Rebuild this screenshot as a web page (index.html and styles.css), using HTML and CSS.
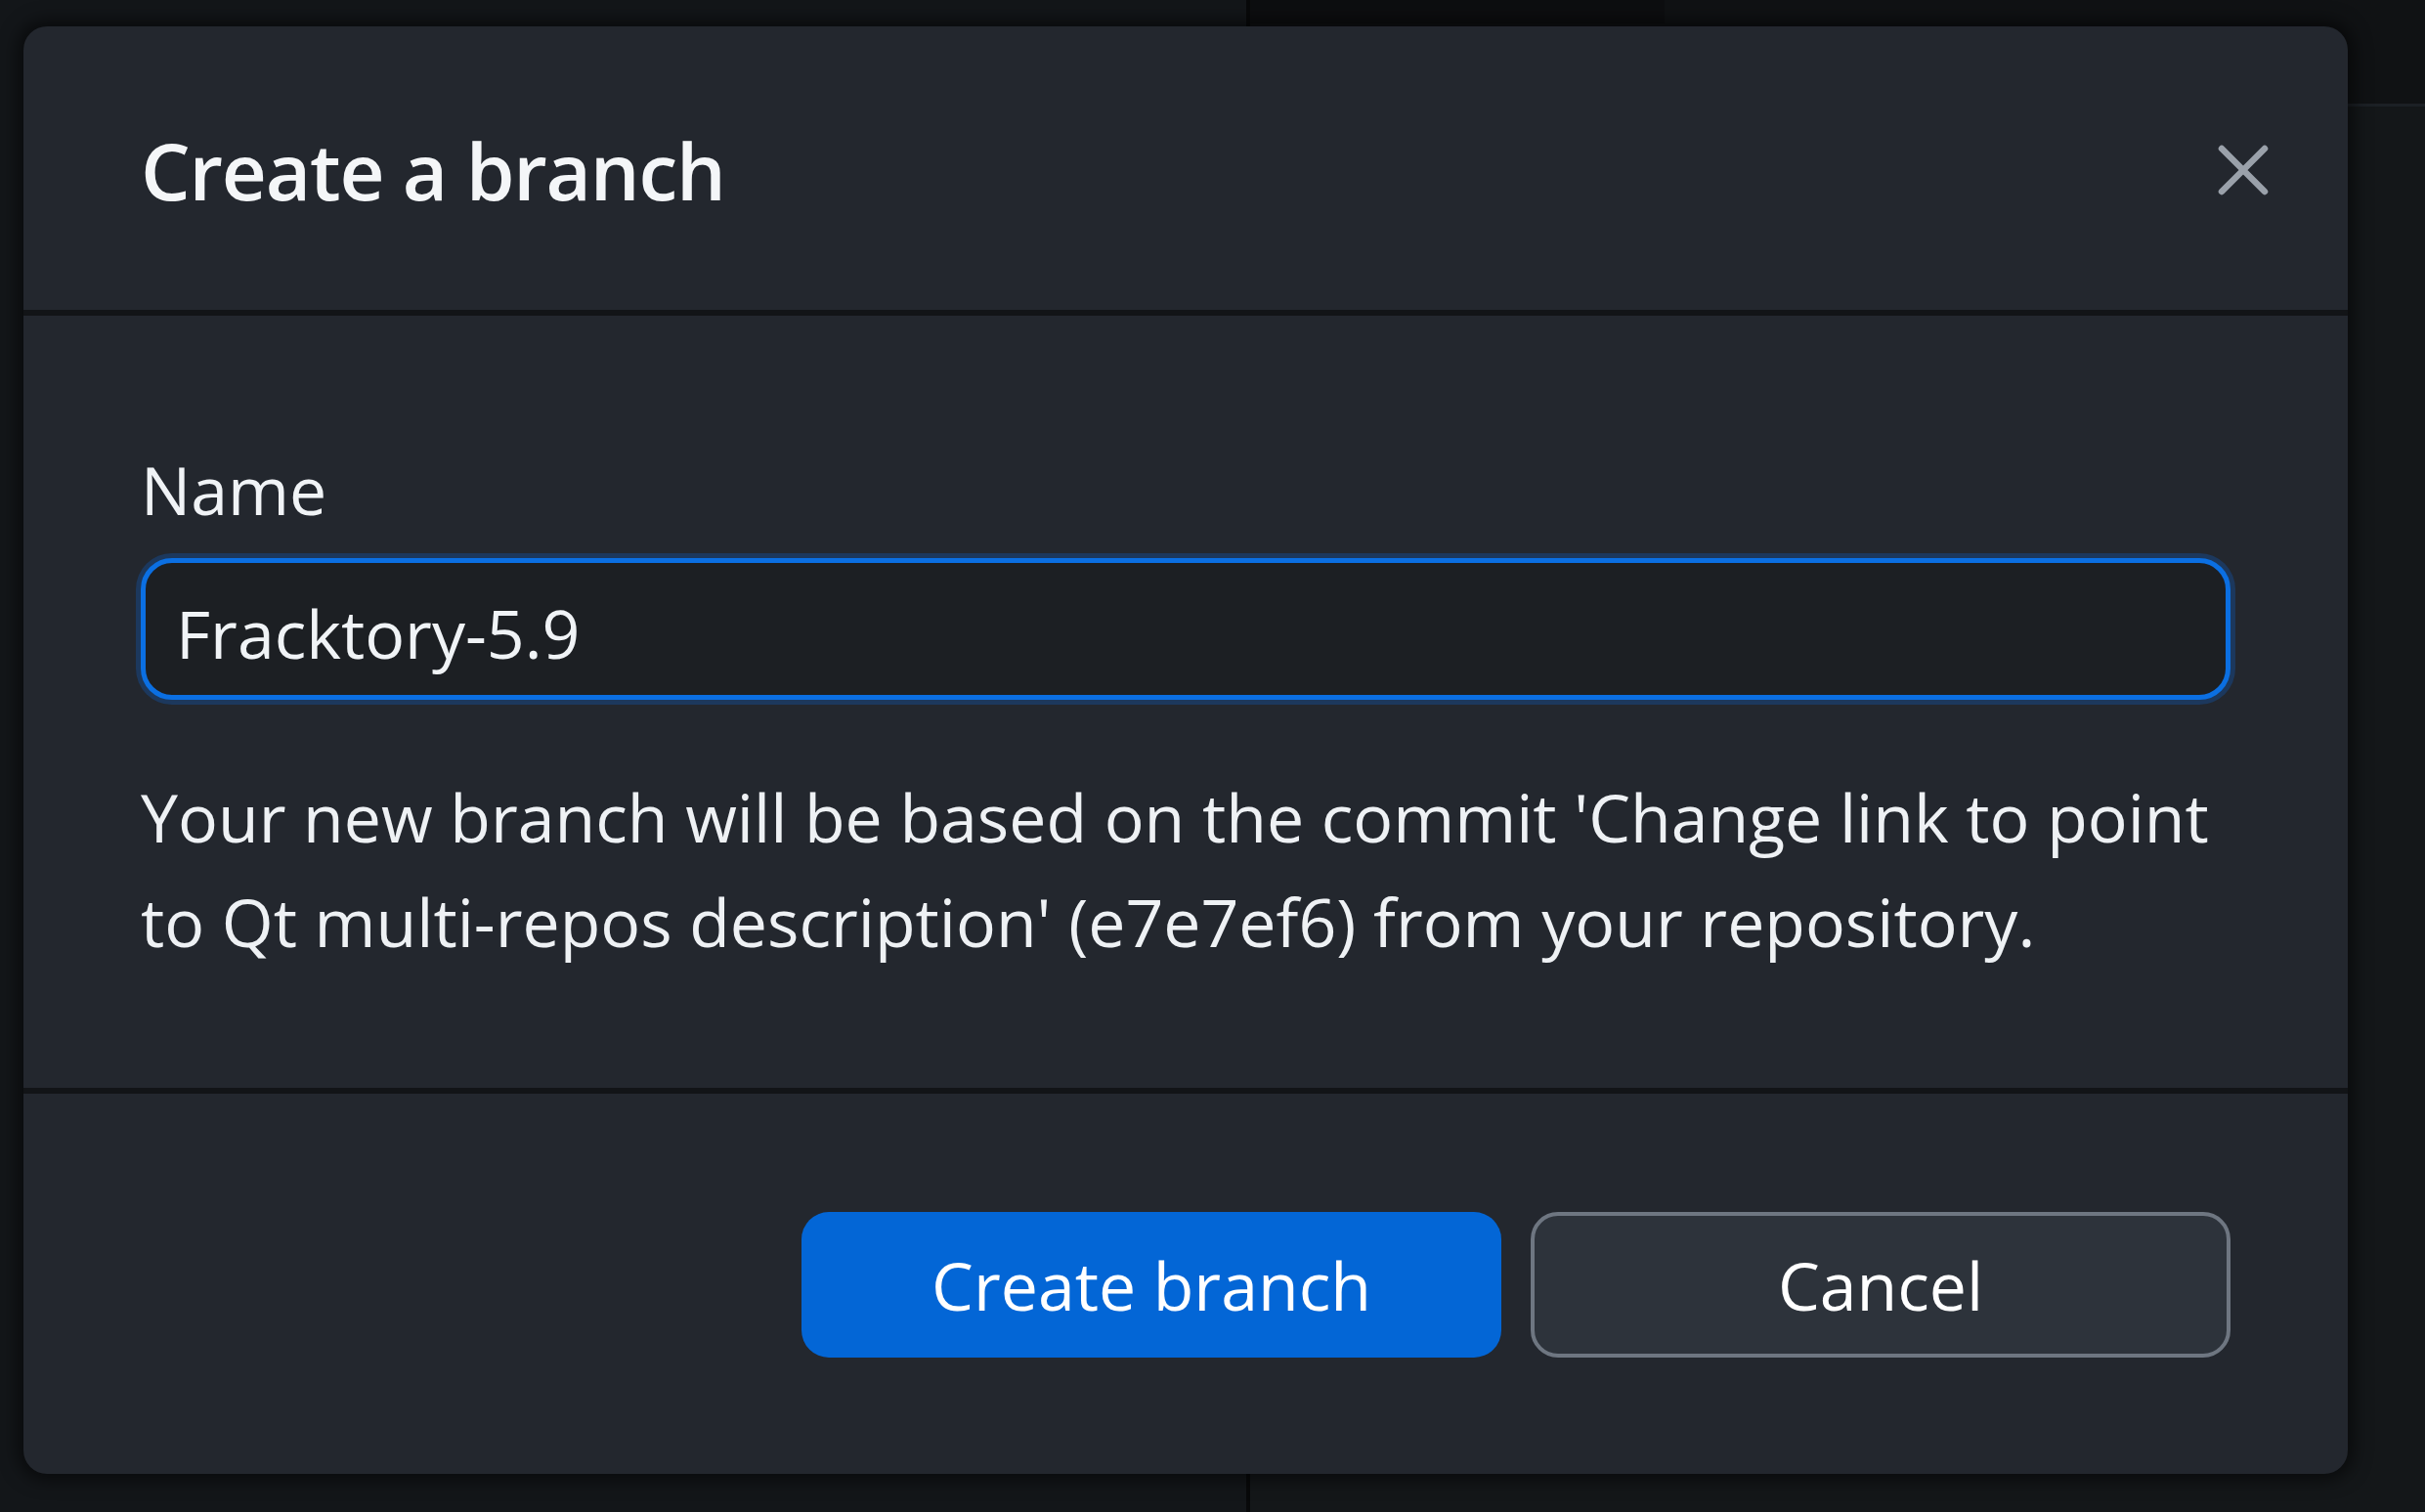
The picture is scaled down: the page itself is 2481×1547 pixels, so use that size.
FILE: index.html
```html
<!DOCTYPE html>
<html lang="en">
<head>
<meta charset="utf-8">
<title>Create a branch</title>
<link rel="stylesheet" href="styles.css">
</head>
<body>
<div class="app">
  <div class="pane-left"></div>
  <div class="pane-sep"></div>
  <div class="pane-right">
    <div class="toolbar">
      <div class="toolbar-dark"></div>
    </div>
    <div class="pane-content"></div>
  </div>
</div>

<div class="dialog" role="dialog" aria-labelledby="dlg-title">
  <header class="dialog-header">
    <h1 id="dlg-title" class="dialog-title">Create a branch</h1>
    <button class="close-btn" aria-label="Close">
      <svg viewBox="0 0 54 54" width="54" height="54" aria-hidden="true">
        <path d="M5 5 L49 49 M49 5 L5 49" stroke="#9aa1aa" stroke-width="6.5" stroke-linecap="round" fill="none"/>
      </svg>
    </button>
  </header>
  <div class="dialog-body">
    <label class="field-label" for="branch-name">Name</label>
    <input id="branch-name" class="text-input" type="text" value="Fracktory-5.9">
    <p class="description">Your new branch will be based on the commit 'Change link to point to Qt multi-repos description' (e7e7ef6) from your repository.</p>
  </div>
  <footer class="dialog-footer">
    <button class="btn btn-primary">Create branch</button>
    <button class="btn btn-secondary">Cancel</button>
  </footer>
</div>
</body>
</html>
```
FILE: styles.css
```css
html, body {
  margin: 0;
  padding: 0;
  width: 2481px;
  height: 1547px;
  overflow: hidden;
  background: #121416;
  font-family: "Open Sans", "Noto Sans", sans-serif;
  color: #f0f3f6;
}

/* underlying app (mostly covered by the modal) */
.app {
  display: flex;
  width: 100%;
  height: 100%;
}
.pane-left {
  width: 1275px;
  background: #131619;
}
.pane-sep {
  width: 4px;
  background: #08090a;
}
.pane-right {
  flex: 1;
  display: flex;
  flex-direction: column;
}
.toolbar {
  height: 106px;
  background: #101214;
  border-bottom: 3px solid #1c2025;
  display: flex;
}
.toolbar-dark {
  width: 424px;
  height: 24px;
  background: #0d0e10;
}
.pane-content {
  flex: 1;
  background: #141719;
}

/* modal dialog lies over the app */
.dialog {
  position: absolute;
  left: 24px;
  top: 27px;
  width: 2378px;
  height: 1481px;
  background: #23272e;
  border-radius: 24px;
  box-shadow: 0 0 18px 6px rgba(0, 0, 0, 0.55);
  display: flex;
  flex-direction: column;
  overflow: hidden;
}

.dialog-header {
  height: 296px;
  flex: none;
  box-sizing: border-box;
  padding: 4px 80px 0 120px;
  display: flex;
  align-items: center;
  justify-content: space-between;
  border-bottom: 6px solid #121417;
}
.dialog-title {
  margin: 0;
  font-size: 80px;
  font-weight: 600;
  letter-spacing: -1.2px;
  line-height: 1.2;
  color: #f4f6f8;
}
.close-btn {
  width: 54px;
  height: 54px;
  padding: 0;
  margin: 0;
  border: 0;
  background: transparent;
  display: flex;
  align-items: center;
  justify-content: center;
}
.close-btn svg { display: block; }

.dialog-body {
  flex: none;
  height: 790px;
  box-sizing: border-box;
  padding: 132px 120px 0 120px;
  display: flex;
  flex-direction: column;
}
.field-label {
  font-size: 68px;
  line-height: 92px;
  color: #f0f3f6;
}
.text-input {
  margin: 24px 0 0 0;
  height: 145px;
  box-sizing: border-box;
  width: 100%;
  border: 5px solid #0b6fe2;
  border-radius: 32px;
  background: #1c1f23;
  box-shadow: 0 0 0 5px rgba(17, 88, 180, 0.35);
  padding: 8px 31px 0 31px;
  font-family: "Open Sans", "Noto Sans", sans-serif;
  font-size: 68px;
  color: #f0f3f6;
  outline: none;
}
.description {
  margin: 66px 0 0 0;
  font-size: 68px;
  line-height: 107px;
  color: #eef1f4;
}

.dialog-footer {
  flex: 1;
  box-sizing: border-box;
  border-top: 6px solid #121417;
  padding: 121px 120px 0 120px;
  display: flex;
  justify-content: flex-end;
  align-items: flex-start;
  gap: 30px;
}
.btn {
  width: 716px;
  height: 149px;
  box-sizing: border-box;
  border-radius: 28px;
  font-family: "Open Sans", "Noto Sans", sans-serif;
  font-size: 68px;
  line-height: 1;
  padding: 0;
  color: #ffffff;
  display: flex;
  align-items: center;
  justify-content: center;
}
.btn-primary {
  background: #0366d6;
  border: 0;
}
.btn-secondary {
  background: #2d333b;
  border: 4px solid #6e7681;
}
```
